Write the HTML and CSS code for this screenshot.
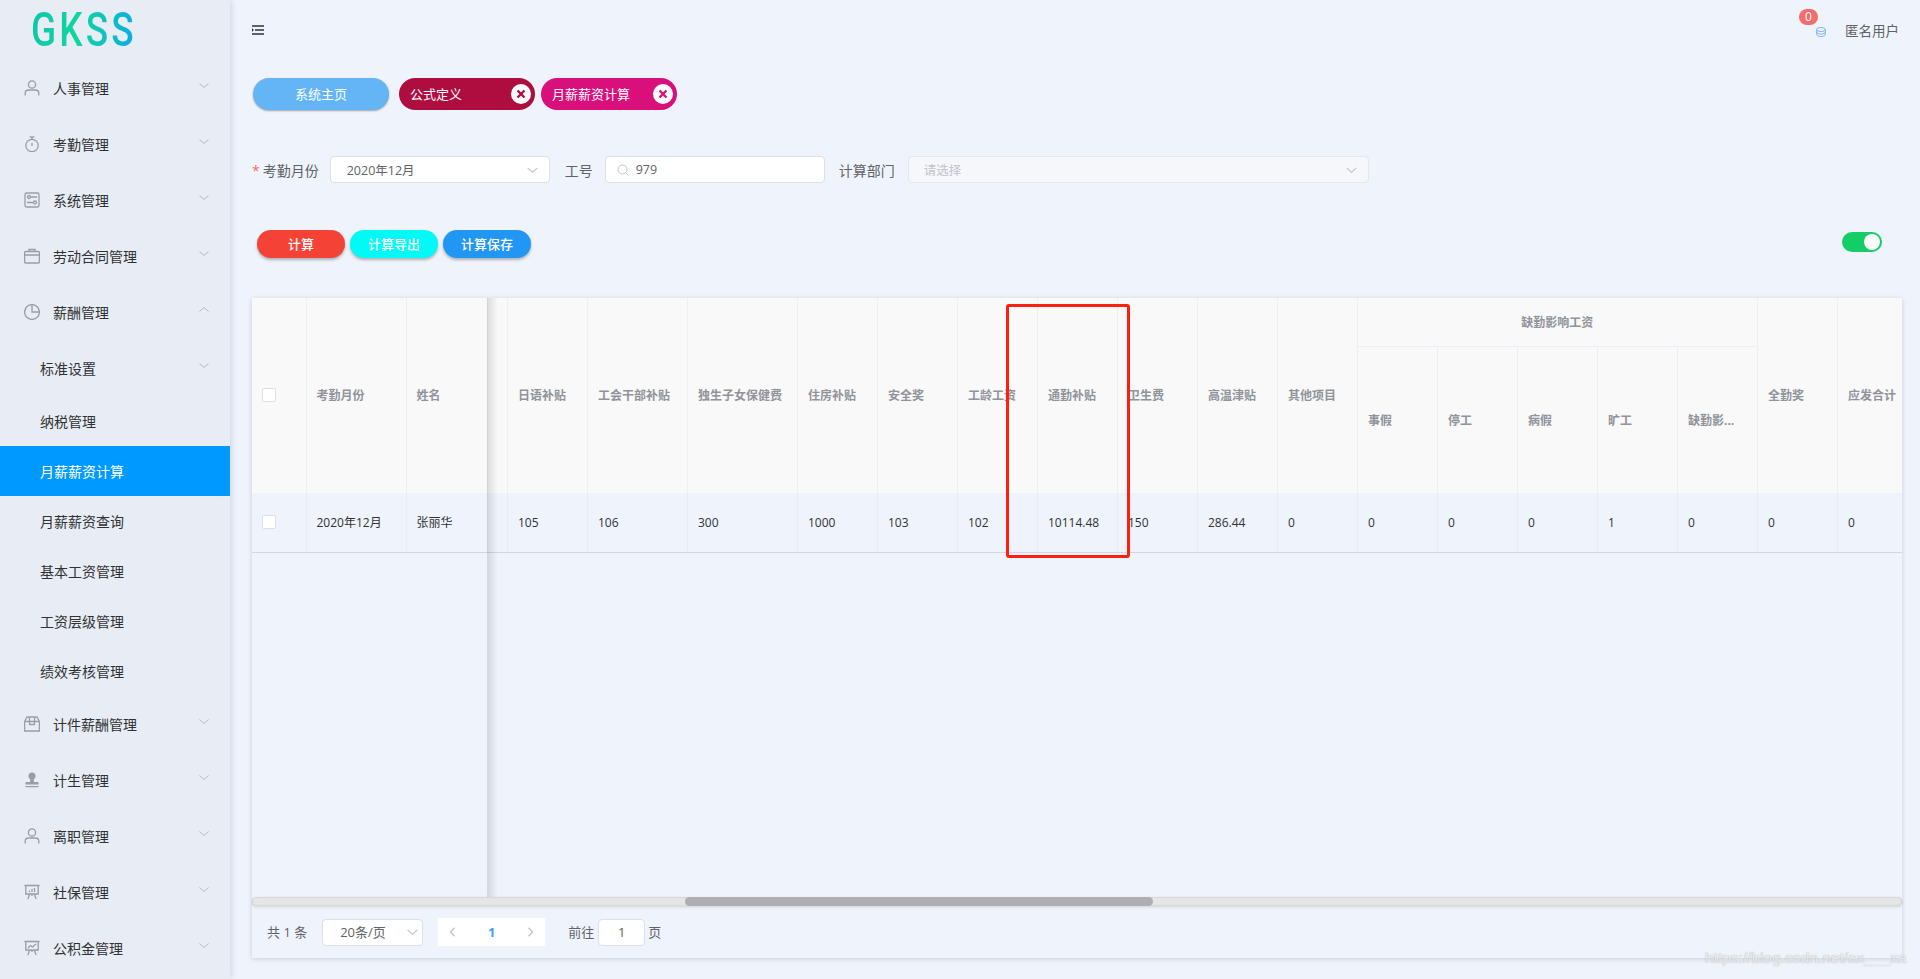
FILE: index.html
```html
<!DOCTYPE html>
<html lang="en">
<head>
  <meta charset="UTF-8">
  <meta name="viewport" content="width=device-width, initial-scale=1.0">
  <title>GKSS</title>
  <link rel="stylesheet" href="styles.css">
</head>
<body>
  <svg class="defs" width="0" height="0">
    <symbol id="chev" viewBox="0 0 10 5"><path d="M.5.5 5 4.5 9.5.5" fill="none" stroke="currentColor"/></symbol>
    <symbol id="person" viewBox="0 0 16 16"><circle cx="8" cy="4.5" r="3.6"/><path d="M1.2 15.5v-2.2c0-2 1.4-3.3 3.3-3.3h7c1.900 0 3.300 1.300 3.300 3.300v2.200"/></symbol>
    <symbol id="board" viewBox="0 0 16 16"><path d="M.5 1.500h15M1.800 1.500v8.500h12.400V1.500M5.500 10l-1.500 5M10.500 10l1.500 5M8 10v2"/></symbol>
  </svg>

  <aside class="sidebar">
    <div class="logo"><span>GKSS</span></div>
    <nav class="menu">
      <a class="item"><svg class="icon"><use href="#person"/></svg>人事管理<svg class="chev"><use href="#chev"/></svg></a>
      <a class="item"><svg class="icon" viewBox="0 0 16 16"><circle cx="8" cy="9.500" r="6.200"/><path d="M5.500.8h5M8 .8v2.500M8 7v3"/></svg>考勤管理<svg class="chev"><use href="#chev"/></svg></a>
      <a class="item"><svg class="icon" viewBox="0 0 16 16"><rect x="1" y="1" width="14" height="14" rx="1.500"/><circle cx="5" cy="5" r="1.500"/><path d="M6.500 5H13M3 10.500h6.500"/><circle cx="11" cy="10.500" r="1.500"/></svg>系统管理<svg class="chev"><use href="#chev"/></svg></a>
      <a class="item"><svg class="icon" viewBox="0 0 16 16"><rect x=".6" y="3.500" width="14.800" height="11.500" rx="1"/><path d="M5 3.500V1.500h6v2M.6 7h14.800"/></svg>劳动合同管理<svg class="chev"><use href="#chev"/></svg></a>
      <a class="item"><svg class="icon" viewBox="0 0 16 16"><circle cx="8" cy="8" r="7.400"/><path d="M8 .6V8h7.400"/></svg>薪酬管理<svg class="chev up"><use href="#chev"/></svg></a>
      <a class="item sub">标准设置<svg class="chev"><use href="#chev"/></svg></a>
      <a class="item leaf">纳税管理</a>
      <a class="item leaf active">月薪薪资计算</a>
      <a class="item leaf">月薪薪资查询</a>
      <a class="item leaf">基本工资管理</a>
      <a class="item leaf">工资层级管理</a>
      <a class="item leaf">绩效考核管理</a>
      <a class="item"><svg class="icon" viewBox="0 0 16 16"><path d="M.6 5.500 3 1h10l2.400 4.500V15H.6zM.6 5.500h14.800M5.500 1v7.500h5V1"/></svg>计件薪酬管理<svg class="chev"><use href="#chev"/></svg></a>
      <a class="item"><svg class="icon solid" viewBox="0 0 16 16"><circle cx="8" cy="4" r="3.500"/><path d="M6.500 6h3l.5 4h4.500v2.500H1.500V10H6zM1.500 14h13v1.200h-13z"/></svg>计生管理<svg class="chev"><use href="#chev"/></svg></a>
      <a class="item"><svg class="icon"><use href="#person"/></svg>离职管理<svg class="chev"><use href="#chev"/></svg></a>
      <a class="item"><svg class="icon"><use href="#board"/><path d="M5.500 8V6.500M8 8V5M10.500 8V4" fill="none"/></svg>社保管理<svg class="chev"><use href="#chev"/></svg></a>
      <a class="item"><svg class="icon"><use href="#board"/><path d="M4 8l2.500-2.500L8.500 7 12 4" fill="none"/></svg>公积金管理<svg class="chev"><use href="#chev"/></svg></a>
    </nav>
  </aside>

  <main class="main">
    <header class="topbar">
      <svg class="burger" viewBox="0 0 12 10"><path d="M0 1h12M3 5h9M0 9h12" stroke="#303133" stroke-width="1.600"/><path d="M0 3.200 2 5 0 6.800z" fill="#303133"/></svg>
      <div class="user">
        <span class="bell">
          <span class="badge">0</span>
          <svg class="db" viewBox="0 0 10 10"><ellipse cx="5" cy="2.500" rx="4.300" ry="2"/><path d="M.7 2.500v5c0 1.100 1.900 2 4.300 2s4.300-.9 4.300-2v-5M.7 5c0 1.100 1.900 2 4.300 2s4.300-.9 4.300-2"/></svg>
        </span>
        <span class="user-name">匿名用户</span>
      </div>
    </header>

    <div class="tabs">
      <a class="tab home">系统主页</a>
      <a class="tab wine">公式定义<span class="tab-x"><svg viewBox="0 0 10 10"><path d="M1.500 1.500l7 7M8.500 1.500l-7 7"/></svg></span></a>
      <a class="tab pink">月薪薪资计算<span class="tab-x"><svg viewBox="0 0 10 10"><path d="M1.500 1.500l7 7M8.500 1.500l-7 7"/></svg></span></a>
    </div>

    <form class="filter">
      <label class="lbl lbl-req"><i>*</i>考勤月份</label>
      <div class="field month">2020年12月<svg class="chev"><use href="#chev"/></svg></div>
      <label class="lbl lbl-no">工号</label>
      <div class="field no"><svg class="search" viewBox="0 0 12 12"><circle cx="5.500" cy="5.500" r="4.500"/><path d="M9 9l2.500 2.500"/></svg>979</div>
      <label class="lbl lbl-dept">计算部门</label>
      <div class="field dept">请选择<svg class="chev"><use href="#chev"/></svg></div>
    </form>

    <div class="actions">
      <button class="btn red" type="button">计算</button>
      <button class="btn cyan" type="button">计算导出</button>
      <button class="btn blue" type="button">计算保存</button>
      <span class="switch"></span>
    </div>

    <section class="card">
      <div class="table-wrap">
        <table class="grid">
          <colgroup>
            <col class="c54"><col class="c100"><col class="c81"><col class="c20">
            <col class="c80"><col class="c100"><col class="c110">
            <col class="c80"><col class="c80"><col class="c80"><col class="c80"><col class="c80"><col class="c80"><col class="c80">
            <col class="c80"><col class="c80"><col class="c80"><col class="c80"><col class="c80">
            <col class="c80"><col class="c80">
          </colgroup>
          <thead>
            <tr class="head-top">
              <th rowspan="2"><span class="check"></span></th>
              <th rowspan="2">考勤月份</th>
              <th rowspan="2">姓名</th>
              <th rowspan="2"></th>
              <th rowspan="2">日语补贴</th>
              <th rowspan="2">工会干部补贴</th>
              <th rowspan="2">独生子女保健费</th>
              <th rowspan="2">住房补贴</th>
              <th rowspan="2">安全奖</th>
              <th rowspan="2">工龄工资</th>
              <th rowspan="2">通勤补贴</th>
              <th rowspan="2">卫生费</th>
              <th rowspan="2">高温津贴</th>
              <th rowspan="2">其他项目</th>
              <th colspan="5" class="center">缺勤影响工资</th>
              <th rowspan="2">全勤奖</th>
              <th rowspan="2">应发合计</th>
            </tr>
            <tr class="head-sub">
              <th>事假</th>
              <th>停工</th>
              <th>病假</th>
              <th>旷工</th>
              <th>缺勤影...</th>
            </tr>
          </thead>
          <tbody>
            <tr>
              <td><span class="check"></span></td>
              <td>2020年12月</td>
              <td>张丽华</td>
              <td></td>
              <td>105</td>
              <td>106</td>
              <td>300</td>
              <td>1000</td>
              <td>103</td>
              <td>102</td>
              <td>10114.48</td>
              <td>150</td>
              <td>286.44</td>
              <td>0</td>
              <td>0</td>
              <td>0</td>
              <td>0</td>
              <td>1</td>
              <td>0</td>
              <td>0</td>
              <td>0</td>
            </tr>
          </tbody>
        </table>
        <div class="fixed-shadow"></div>
      </div>
      <div class="scrollbar"><div class="thumb"></div></div>
      <div class="pager">
        <span class="total">共 1 条</span>
        <div class="field size">20条/页<svg class="chev"><use href="#chev"/></svg></div>
        <div class="pages">
          <svg class="arrow" viewBox="0 0 6 10"><path d="M5 .8 1 5l4 4.200"/></svg>
          <b>1</b>
          <svg class="arrow" viewBox="0 0 6 10"><path d="M1 .8 5 5 1 9.200"/></svg>
        </div>
        <span class="jump">前往</span>
        <div class="field goto">1</div>
        <span class="page-word">页</span>
      </div>
    </section>
  </main>

  <!-- red annotation drawn over the screenshot -->
  <div class="mark"></div>
  <div class="watermark">https://blog.csdn.net/ax___xa</div>
</body>
</html>
```

FILE: styles.css
```css
* {
  box-sizing: border-box;
}

body {
  margin: 0;
  height: 979px;
  display: flex;
  overflow: hidden;
  background-color: #eff4fc;
  color: #303133;
  font-family: "Open Sans", "Noto Sans CJK SC", sans-serif;
  font-size: 14px;
}

.defs {
  position: absolute;
}

/* Sidebar */
.sidebar {
  width: 230px;
  flex-shrink: 0;
  background-color: #e8edf5;
  box-shadow: 2px 0 6px rgba(0, 21, 41, 0.12);
}

.logo {
  height: 60px;
  padding-top: 1px;
  padding-left: 31px;
}

.logo span {
  display: inline-block;
  font-family: Roboto, sans-serif;
  font-size: 48px;
  font-weight: 500;
  line-height: 58px;
  letter-spacing: 4px;
  transform: scaleX(0.77);
  transform-origin: left center;
  background: linear-gradient(100deg, #0cc7ab 0%, #12d5a0 45%, #09a9e8 100%);
  -webkit-background-clip: text;
  background-clip: text;
  color: transparent;
}

.item {
  display: flex;
  align-items: center;
  height: 56px;
  padding: 0 21px 0 24px;
  color: #303133;
}

.item .icon {
  width: 16px;
  height: 16px;
  margin-right: 13px;
  fill: none;
  stroke: #989da6;
  stroke-width: 1.300;
}

.item .icon.solid {
  fill: #989da6;
  stroke: none;
}

.chev {
  width: 10px;
  height: 5px;
  margin-left: auto;
  margin-bottom: 5px;
  color: #b4b9c2;
}

.chev.up {
  transform: rotate(180deg);
}

.item.sub {
  padding-left: 40px;
}

.item.leaf {
  height: 50px;
  padding-left: 40px;
}

.item.active {
  background-color: #0099ff;
  color: #fff;
}

/* Top bar */
.main {
  flex: 1;
  min-width: 0;
  padding: 0 18px 0 22px;
}

.topbar {
  display: flex;
  align-items: center;
  justify-content: space-between;
  height: 60px;
}

.burger {
  width: 12px;
  height: 10px;
  margin-left: 0;
}

.user {
  display: flex;
  align-items: center;
  color: #606266;
  font-size: 13.500px;
}

.bell {
  position: relative;
  width: 10px;
  height: 10px;
  margin-top: 4px;
  margin-right: 19px;
}

.badge {
  position: absolute;
  top: -18px;
  left: -17px;
  width: 19px;
  height: 16px;
  border-radius: 8px;
  background-color: #f56c6c;
  color: #fff;
  font-size: 12px;
  line-height: 16px;
  text-align: center;
}

.db {
  display: block;
  width: 10px;
  height: 10px;
  fill: none;
  stroke: #7fb3f5;
  stroke-width: 1;
}

.user-name {
  margin-right: 3px;
}

/* Tabs */
.tabs {
  display: flex;
  margin-top: 18px;
  margin-left: 1px;
  height: 32px;
}

.tab {
  display: flex;
  align-items: center;
  justify-content: space-between;
  width: 136px;
  height: 32px;
  padding: 0 4px 0 11px;
  border-radius: 16px;
  color: #fff;
  font-size: 13px;
  line-height: 30px;
}

.tab.home {
  justify-content: center;
  padding: 0 0 1px;
  background-color: #64b5f6;
  box-shadow: 0 1px 2px rgba(0, 0, 0, 0.35);
}

.tab.wine {
  margin-left: 10px;
  background-color: #ad0e3f;
}

.tab.pink {
  margin-left: 6px;
  background-color: #d90f7c;
}

.tab-x {
  display: flex;
  align-items: center;
  justify-content: center;
  width: 20px;
  height: 20px;
  border-radius: 50%;
  background-color: #fff;
}

.tab-x svg {
  width: 10px;
  height: 10px;
  fill: none;
  stroke-width: 2.400;
}

.wine .tab-x svg {
  stroke: #ad0e3f;
}

.pink .tab-x svg {
  stroke: #d90f7c;
}

/* Filter form */
.filter {
  display: flex;
  align-items: center;
  margin-top: 46px;
  height: 27px;
}

.lbl {
  color: #606266;
  font-size: 14px;
  white-space: nowrap;
}

.lbl i {
  margin-right: 3px;
  color: #f56c6c;
  font-style: normal;
}

.lbl-no {
  margin-left: 15px;
}

.lbl-dept {
  margin-left: 14px;
}

.field {
  display: flex;
  align-items: center;
  height: 27px;
  border: 1px solid #dcdfe6;
  border-radius: 4px;
  background-color: #fff;
  color: #606266;
  font-size: 12.500px;
}

.field .chev {
  margin-bottom: 0;
  width: 11px;
  height: 6px;
  color: #c0c4cc;
}

.month {
  width: 220px;
  margin-left: 11px;
  padding: 0 11px 0 16px;
}

.no {
  width: 220px;
  margin-left: 12px;
  padding-left: 11px;
}

.search {
  width: 12px;
  height: 12px;
  margin-right: 7px;
  fill: none;
  stroke: #c0c4cc;
}

.dept {
  width: 461px;
  margin-left: 13px;
  padding: 0 11px 0 15px;
  border-color: #e4e7ed;
  background-color: #f5f7fa;
  color: #c0c4cc;
}

/* Action buttons */
.actions {
  display: flex;
  align-items: center;
  margin-top: 47px;
  padding-left: 5px;
  height: 28px;
}

.btn {
  width: 88px;
  height: 28px;
  margin-right: 5px;
  padding: 0 0 2px;
  border: none;
  border-radius: 14px;
  color: #fff;
  font-family: inherit;
  font-size: 13px;
  font-weight: 500;
  box-shadow: 0 2px 3px rgba(0, 0, 0, 0.28);
}

.btn.red {
  background-color: #f44336;
}

.btn.cyan {
  background-color: #00fbf6;
}

.btn.blue {
  background-color: #2196f3;
}

.switch {
  position: relative;
  width: 40px;
  height: 20px;
  margin-left: auto;
  margin-right: 20px;
  margin-bottom: 4px;
  border-radius: 10px;
  background-color: #13ce66;
}

.switch::after {
  content: "";
  position: absolute;
  top: 2px;
  right: 2px;
  width: 16px;
  height: 16px;
  border-radius: 50%;
  background-color: #fff;
}

/* Table card */
.card {
  margin-top: 40px;
  height: 660px;
  box-shadow: 0 1px 5px rgba(0, 0, 0, 0.16);
}

.table-wrap {
  position: relative;
  height: 599px;
  overflow: hidden;
}

.grid {
  table-layout: fixed;
  width: 1665px;
  border-collapse: collapse;
  font-size: 12px;
}

.c20 { width: 20px; }
.c54 { width: 54px; }
.c80 { width: 80px; }
.c81 { width: 81px; }
.c100 { width: 100px; }
.c110 { width: 110px; }

.grid th {
  padding: 0 10px 1px;
  border-right: 1px solid #eeeff3;
  background-color: #f9f9f9;
  color: #909399;
  font-weight: 700;
  text-align: left;
  white-space: nowrap;
}

.grid th.center {
  padding-bottom: 0;
  text-align: center;
  border-bottom: 1px solid #ebeef5;
}

.head-top {
  height: 48px;
}

.head-sub {
  height: 147px;
}

.grid td {
  height: 59px;
  padding: 0 10px;
  border-right: 1px solid #e8ecf3;
  border-bottom: 1px solid #d3d7dc;
  white-space: nowrap;
}

.grid th:nth-child(n+5),
.grid td:nth-child(n+5),
.head-sub th {
  padding-left: 10.500px;
}

.head-sub th {
  padding-bottom: 0;
}

.check {
  display: block;
  width: 14px;
  height: 14px;
  border: 1px solid #dcdfe6;
  border-radius: 2px;
  background-color: #fff;
}

.fixed-shadow {
  position: absolute;
  top: 0;
  bottom: 0;
  left: 235px;
  width: 11px;
  background: linear-gradient(to right, rgba(0, 0, 0, 0.12), rgba(0, 0, 0, 0));
}

.scrollbar {
  height: 9px;
  border-radius: 5px;
  background-color: #e6e6e6;
  box-shadow: inset 0 0 2px rgba(0, 0, 0, 0.2), 0 1px 3px rgba(0, 0, 0, 0.14);
}

.thumb {
  width: 468px;
  height: 9px;
  margin-left: 433px;
  border-radius: 5px;
  background-color: #aeaeb3;
}

/* Pagination */
.pager {
  display: flex;
  align-items: center;
  margin-top: 12px;
  padding-left: 15px;
  height: 28px;
  color: #606266;
  font-size: 13px;
  line-height: 26px;
}

.size {
  justify-content: space-between;
  width: 101px;
  margin-left: 15px;
  padding: 0 4px 0 17px;
  font-size: 13px;
}

.pages {
  display: flex;
  align-items: center;
  justify-content: space-between;
  width: 107px;
  height: 28px;
  margin-left: 15px;
  padding: 0 11px;
  background-color: #fff;
}

.pages b {
  color: #409eff;
  font-size: 13px;
}

.arrow {
  width: 7px;
  height: 10px;
  fill: none;
  stroke: #c0c4cc;
  stroke-width: 1.400;
}

.jump {
  margin-left: 23px;
}

.goto {
  justify-content: center;
  width: 47px;
  margin-left: 4px;
  font-size: 13px;
}

.page-word {
  margin-left: 3px;
}

/* Annotation and watermark */
.mark {
  position: absolute;
  top: 304px;
  left: 1006px;
  width: 124px;
  height: 254px;
  border: 3px solid #ff1f10;
  border-radius: 3px;
}

.watermark {
  position: absolute;
  top: 949px;
  left: 1705px;
  color: rgba(255, 255, 255, 0.8);
  font-family: "Liberation Sans", sans-serif;
  font-size: 15.500px;
  text-shadow: 0 0 1px rgba(90, 90, 90, 0.6);
  white-space: nowrap;
}
```
